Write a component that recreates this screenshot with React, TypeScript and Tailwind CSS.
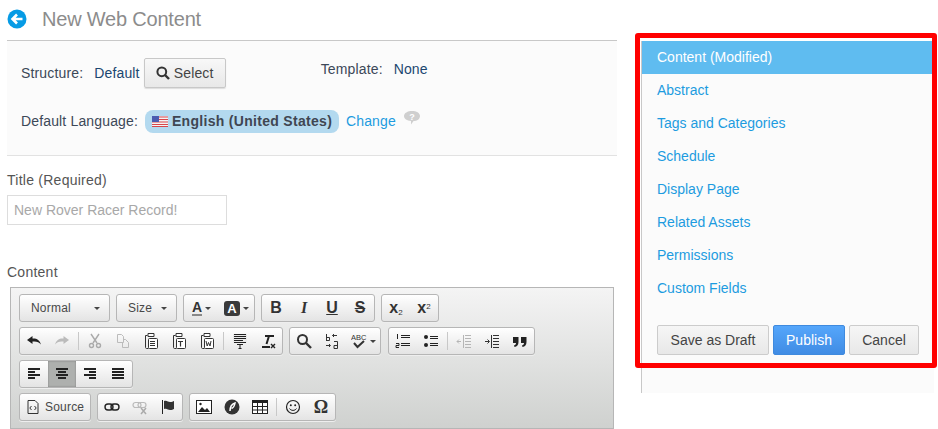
// App.tsx
import React from 'react';

const font = "font-['Liberation_Sans',Arial,sans-serif]";

const Svg = ({ children, w = 16, h = 16 }: { children: React.ReactNode; w?: number; h?: number }) => (
  <svg width={w} height={h} viewBox={`0 0 ${w} ${h}`} fill="none" stroke="#333" strokeWidth="1">
    {children}
  </svg>
);

const Lines = ({ rows }: { rows: [number, number, number][] }) => (
  <Svg>
    {rows.map(([x1, x2, y]) => (
      <rect key={y} x={x1} y={y} width={x2 - x1} height="2" fill="#222" stroke="none" />
    ))}
  </Svg>
);

const Clipboard = ({ inner }: { inner: React.ReactNode }) => (
  <Svg>
    <path d="M4.500 2.500h-2v12c0 .5.500 1 1 1h2" stroke="#333" />
    <path d="M5 .5h6v3H5z" fill="#fff" stroke="#333" />
    <rect x="5.500" y="5.500" width="9" height="10" rx="1" fill="#fff" stroke="#333" />
    {inner}
  </Svg>
);

const Btn = ({ children, active }: { children: React.ReactNode; active?: boolean }) => (
  <div className={`w-7 h-full flex items-center justify-center ${active ? 'bg-[#aeb0ae] shadow-[inset_0_0_2px_#777]' : ''}`}>
    {children}
  </div>
);

const Sep = () => (
  <div className="w-[5px] h-full flex items-center justify-center">
    <div className="w-px h-[18px] bg-[#c8c8c8]" />
  </div>
);

const Group = ({ children }: { children: React.ReactNode }) => (
  <div className="h-7 flex border border-[#b6b6b6] rounded-[3px] bg-gradient-to-b from-white to-[#e4e4e4] overflow-hidden shadow-[0_1px_0_#eee]">
    {children}
  </div>
);

const Arrow = () => <div className="w-0 h-0 border-x-[3px] border-x-transparent border-t-[3px] border-t-[#444]" />;

const Combo = ({ label, width }: { label: string; width: string }) => (
  <div className={`${width} h-7 flex items-center justify-between pl-[11px] pr-[9px] border border-[#b6b6b6] rounded-[3px] bg-gradient-to-b from-white to-[#e4e4e4] text-[12px] tracking-[0.2px] text-[#484848]`}>
    <span>{label}</span>
    <Arrow />
  </div>
);

const Glyph = ({ children, className = '' }: { children: React.ReactNode; className?: string }) => (
  <span className={`text-[16px] leading-none font-bold text-[#333] ${className}`}>{children}</span>
);

const menuItems = ['Abstract', 'Tags and Categories', 'Schedule', 'Display Page', 'Related Assets', 'Permissions', 'Custom Fields'];

export default function App() {
  return (
    <div className={`${font} relative w-[938px] h-[429px] overflow-hidden bg-white flex text-[14px]`}>
      <div className="w-[610px] ml-[7px] shrink-0">
        <header className="h-[41px] border-b border-[#c8c8c8] flex items-start pt-[9px]">
          <svg width="20" height="20" viewBox="0 0 20 20">
            <circle cx="10" cy="10" r="9.500" fill="#069be5" />
            <path d="M15.500 10H6M10 5.500 5.500 10l4.500 4.500" stroke="#fff" strokeWidth="2.600" fill="none" />
          </svg>
          <h1 className="ml-[15px] text-[20px] leading-[20px] tracking-[-0.2px] text-[#8c8c8c]">New Web Content</h1>
        </header>

        <section className="h-[115px] bg-[#fbfbfb] border-b border-[#e2e2e2] pl-[14px] text-[#3c4858] tracking-[0.15px]">
          <div className="flex items-start pt-[17px] h-[64px]">
            <span className="mt-[5px]">Structure:</span>
            <span className="ml-[11px] mt-[5px] text-[#1c4770]">Default</span>
            <button className="ml-[4px] w-[82px] h-[30px] flex items-center justify-center gap-[4px] border border-[#c8c8c8] rounded-[2px] bg-gradient-to-b from-[#f8f8f8] to-[#e8e8e8] text-[#444] shadow-[0_1px_1px_#ddd]">
              <svg width="14" height="14" viewBox="0 0 14 14" fill="none" stroke="#333" strokeWidth="2">
                <circle cx="5.800" cy="5.800" r="4.400" />
                <path d="m9 9 4 4" strokeWidth="2.400" />
              </svg>
              Select
            </button>
            <span className="ml-[95px] mt-[1px]">Template:</span>
            <span className="ml-[11px] mt-[1px] text-[#1c4770]">None</span>
          </div>
          <div className="flex items-center h-[24px] mt-[4px]">
            <span>Default Language:</span>
            <span className="ml-[7px] h-[23px] w-[194px] flex items-center pl-[7px] rounded-[8px] bg-[#b3d9ef] font-bold text-[#3f4652] text-[14px] tracking-[0.3px]">
              <svg width="16" height="11" viewBox="0 0 16 11" className="mr-[4px]">
                <rect width="16" height="11" fill="#f4f4f4" />
                <path d="M0 1h16M0 3.500h16M0 6h16M0 8.500h16M0 10.500h16" stroke="#d8454a" strokeWidth="1" />
                <rect width="7" height="6" fill="#4a5bb0" />
              </svg>
              English (United States)
            </span>
            <span className="ml-[7px] text-[#1d9be0]">Change</span>
            <svg width="16" height="14" viewBox="0 0 16 14" className="ml-[8px] -mt-[7px]">
              <path d="M8 0c4.400 0 8 1.900 8 5s-3 5-6.400 5L7 13.400 7 9.900C3 9.700 0 8 0 5s3.600-5 8-5z" fill="#cfcfcf" />
              <text x="8" y="8.500" textAnchor="middle" fontSize="9" fontWeight="bold" fill="#fff">?</text>
            </svg>
          </div>
        </section>

        <div className="mt-[16px] leading-[16px] tracking-[0.25px] text-[#555]">Title (Required)</div>
        <input
          readOnly
          placeholder="New Rover Racer Record!"
          className="mt-[7px] block w-[220px] h-[30px] px-[6px] border border-[#ddd] bg-white text-[14px] placeholder:text-[#a8a8a8]"
        />
        <div className="mt-[39px] leading-[16px] tracking-[0.25px] text-[#555]">Content</div>

        <div className="mt-[7px] ml-[3px] w-[604px] h-[142px] border border-[#b6b6b6] bg-gradient-to-b from-[#f4f4f4] to-[#cfd1cf] pt-[6px] pl-[8px] flex flex-col gap-[5px]">
          <div className="flex gap-[6px]">
            <Combo label="Normal" width="w-[91px]" />
            <Combo label="Size" width="w-[61px]" />
            <Group>
              <div className="w-[35px] flex items-center justify-center gap-[3px]">
                <span className="text-[14px] font-bold leading-[14px] text-[#333] border-b-2 border-[#888]">A</span>
                <Arrow />
              </div>
              <div className="w-[35px] flex items-center justify-center gap-[3px]">
                <span className="w-4 h-[15px] rounded-[3px] bg-[#3a3a3a] text-white text-[13px] font-bold leading-[15px] text-center">A</span>
                <Arrow />
              </div>
            </Group>
            <Group>
              <Btn><Glyph>B</Glyph></Btn>
              <Btn><Glyph className="italic font-['Liberation_Serif']">I</Glyph></Btn>
              <Btn><Glyph className="underline">U</Glyph></Btn>
              <Btn><Glyph className="line-through">S</Glyph></Btn>
            </Group>
            <Group>
              <Btn><Glyph className="text-[14px]">x<sub className="text-[8px] font-normal">2</sub></Glyph></Btn>
              <Btn><Glyph className="text-[14px]">x<sup className="text-[8px] font-normal">2</sup></Glyph></Btn>
            </Group>
          </div>

          <div className="flex gap-[6px]">
            <Group>
              <Btn><Svg><path d="M6.500 3v2.600c4-.4 7 1.400 8.500 6-2-2.600-4.500-3.400-8.500-3V11L1 7z" fill="#222" stroke="none" /></Svg></Btn>
              <Btn><Svg><path d="M9.500 3v2.600c-4-.4-7 1.400-8.500 6 2-2.600 4.500-3.400 8.500-3V11L15 7z" fill="#bbb" stroke="none" /></Svg></Btn>
              <Sep />
              <Btn>
                <Svg>
                  <g stroke="#aaa" strokeWidth="1.400">
                    <path d="m4 1 6 9M12 1l-6 9" />
                    <circle cx="4.500" cy="12.500" r="2" />
                    <circle cx="11.500" cy="12.500" r="2" />
                  </g>
                </Svg>
              </Btn>
              <Btn><Svg><path d="M2.500 1.500h4l2 2v6h-6zM8.500 6.500h2l3 3v5h-6v-5" stroke="#bbb" /></Svg></Btn>
              <Btn><Clipboard inner={<path d="M7 8.500h5M7 10.500h5M7 12.500h5" />} /></Btn>
              <Btn><Clipboard inner={<path d="M7 8.500h5M9.500 8.500V13.500" strokeWidth="1.200" />} /></Btn>
              <Btn><Clipboard inner={<path d="m7 8 1.200 5 1.300-3.500L11 13l1-5" />} /></Btn>
              <Sep />
              <Btn>
                <Svg>
                  <rect x="1" y="1" width="14" height="9" fill="#e9e9e9" stroke="none" />
                  <path d="M2 1.500h12M2 3.500h12M2 5.500h12M2 7.500h9M2 9.500h12M5 11.500h6M8 11.500V15M6.500 15.500h3" stroke="#222" />
                </Svg>
              </Btn>
              <Btn>
                <Svg>
                  <path d="M5 3h9M9 3 6.500 11M2 14h8" stroke="#222" strokeWidth="2" />
                  <path d="m11 11 4 4M15 11l-4 4" stroke="#222" strokeWidth="1.400" />
                </Svg>
              </Btn>
            </Group>
            <Group>
              <Btn>
                <svg width="16" height="16" viewBox="0 0 16 16" fill="none" stroke="#333" strokeWidth="2">
                  <circle cx="6.500" cy="6.500" r="4.500" />
                  <path d="m10 10 5 5" strokeWidth="2.400" />
                </svg>
              </Btn>
              <Btn>
                <Svg>
                  <path d="M2.500 1v7M2.500 4.500h3v3h-3M13 2.500H8.500M10 1 8.500 2.500 10 4M2 12.500h4M5 11l1.500 1.500L5 14M10 8.500h3.500v7H10v-3h3.500" stroke="#333" />
                </Svg>
              </Btn>
              <div className="w-[34px] flex items-center justify-center gap-[2px]">
                <svg width="17" height="16" viewBox="0 0 17 16">
                  <text x="0" y="7" fontSize="7.500" fill="#333" fontFamily="Liberation Sans">ABC</text>
                  <path d="m3 10 3.500 4L13 8" stroke="#333" strokeWidth="2" fill="none" />
                </svg>
                <Arrow />
              </div>
            </Group>
            <div className="ml-px">
              <Group>
                <Btn>
                  <Svg>
                    <path d="M6 2.500h9M6 4.500h9M6 10.500h9M6 12.500h9" stroke="#222" />
                    <path d="M2.500 1v5M1 10.500h3v2H1v2h3" stroke="#222" />
                  </Svg>
                </Btn>
                <Btn>
                  <Svg>
                    <circle cx="3" cy="4" r="2" fill="#222" stroke="none" />
                    <circle cx="3" cy="12" r="2" fill="#222" stroke="none" />
                    <path d="M7 3.500h8M7 5.500h8M7 10.500h8M7 12.500h8" stroke="#222" />
                  </Svg>
                </Btn>
                <Sep />
                <Btn><Svg><path d="M9 2.500h6M9 5.500h6M9 8.500h6M9 11.500h6M9 14.500h6M7.500 2v13M1 8.500h4M3 6.500l-2 2 2 2" stroke="#b5b5b5" /></Svg></Btn>
                <Btn><Svg><path d="M9 2.500h6M9 5.500h6M9 8.500h6M9 11.500h6M9 14.500h6M7.500 2v13M1 8.500h4M3.500 6.500l2 2-2 2" stroke="#333" /></Svg></Btn>
                <Btn><Svg><path d="M1 4h5.500v5C6.500 12 5 13.500 2.500 14l-.5-1.500C3.500 12 4 11 4 10H1zM9 4h5.500v5c0 3-1.500 4.500-4 5l-.5-1.500c1.500-.5 2-1.500 2-2.500H9z" fill="#222" stroke="none" /></Svg></Btn>
              </Group>
            </div>
          </div>

          <div className="flex">
            <Group>
              <Btn><Lines rows={[[2, 14, 2], [2, 9, 5], [2, 14, 8], [2, 9, 11]]} /></Btn>
              <Btn active><Lines rows={[[2, 14, 2], [4, 12, 5], [2, 14, 8], [4, 12, 11]]} /></Btn>
              <Btn><Lines rows={[[2, 14, 2], [7, 14, 5], [2, 14, 8], [7, 14, 11]]} /></Btn>
              <Btn><Lines rows={[[2, 14, 2], [2, 14, 5], [2, 14, 8], [2, 14, 11]]} /></Btn>
            </Group>
          </div>

          <div className="flex gap-[6px]">
            <Group>
              <div className="w-[70px] flex items-center pl-[5px] gap-[4px] text-[12px] tracking-[0.2px] text-[#484848]">
                <Svg><path d="M3 1.500h7l3 3v10H3zM6.500 7 4.800 9l1.700 2M9.500 7l1.700 2-1.700 2" stroke="#333" /></Svg>
                Source
              </div>
            </Group>
            <Group>
              <Btn><Svg><rect x="1" y="5" width="8" height="6" rx="3" strokeWidth="1.400" stroke="#222" /><rect x="7" y="5" width="8" height="6" rx="3" strokeWidth="1.400" stroke="#222" /></Svg></Btn>
              <Btn><Svg><rect x="1" y="3.500" width="8" height="5" rx="2.500" strokeWidth="1.200" stroke="#bbb" /><rect x="6" y="3.500" width="8" height="5" rx="2.500" strokeWidth="1.200" stroke="#bbb" /><path d="m9 9 5 6M14 9l-5 6" stroke="#aaa" strokeWidth="1.500" /></Svg></Btn>
              <Btn><Svg><path d="M2.500 1v14" stroke="#222" /><path d="M4 2c3-1 4 1 6 1s3-.5 4-1v8c-1 .5-2 1-4 1s-3-2-6-1z" fill="#333" stroke="none" /></Svg></Btn>
            </Group>
            <Group>
              <Btn><Svg><rect x=".5" y="1.500" width="15" height="13" fill="#fff" stroke="#222" /><path d="m2 13 4-5 3 3 2-2 3 4z" fill="#222" stroke="none" /><circle cx="4.500" cy="5" r="1.200" fill="#222" stroke="none" /></Svg></Btn>
              <Btn><Svg><circle cx="8" cy="8" r="7.500" fill="#333" stroke="none" /><path d="M6 12c0-4 2-7 5-8-.5 3-2 5-3.500 5.500" stroke="#fff" strokeWidth="1.500" /></Svg></Btn>
              <Btn><Svg><rect x=".5" y="1.500" width="15" height="13" fill="#fff" stroke="#222" /><rect x="0" y="1" width="16" height="3" fill="#222" stroke="none" /><path d="M5.500 4v10M10.500 4v10M1 7.500h14M1 11h14" stroke="#222" /></Svg></Btn>
              <Sep />
              <Btn><Svg><circle cx="8" cy="8" r="6.500" strokeWidth="1.200" stroke="#222" /><circle cx="5.800" cy="6.300" r="1" fill="#222" stroke="none" /><circle cx="10.200" cy="6.300" r="1" fill="#222" stroke="none" /><path d="M4.500 9.500c1.500 2.500 5.500 2.500 7 0" stroke="#222" /></Svg></Btn>
              <Btn><span className="font-['Liberation_Serif'] text-[18px] font-bold leading-none text-[#333]">Ω</span></Btn>
            </Group>
          </div>
        </div>
      </div>

      <aside className="ml-[24px] mt-[41px] w-[293px] h-[352px] bg-[#fbfbfb] border-l border-[#c8c8c8]">
        <div className="h-[33px] flex items-center pl-[15px] bg-[#5fbcf0] text-white">Content (Modified)</div>
        <nav className="flex flex-col pl-[15px] text-[#1d9be0]">
          {menuItems.map(item => (
            <div key={item} className="h-[33px] flex items-center">{item}</div>
          ))}
        </nav>
        <div className="mt-[20px] pl-[15px] flex gap-[4px] h-[30px]">
          <button className="w-[112px] border border-[#ccc] rounded-[2px] bg-gradient-to-b from-[#f6f6f6] to-[#e8e8e8] text-[#444]">Save as Draft</button>
          <button className="w-[72px] border border-[#3f8ade] rounded-[2px] bg-gradient-to-b from-[#55a6fb] to-[#408ce4] text-white">Publish</button>
          <button className="w-[70px] border border-[#ccc] rounded-[2px] bg-gradient-to-b from-[#f6f6f6] to-[#e8e8e8] text-[#444]">Cancel</button>
        </div>
      </aside>

      {/* red annotation frame over the sidebar */}
      <div className="absolute left-[635px] top-[33px] w-[302px] h-[335px] border-[5px] border-[#ff0000] rounded-[3px] pointer-events-none" />
    </div>
  );
}
